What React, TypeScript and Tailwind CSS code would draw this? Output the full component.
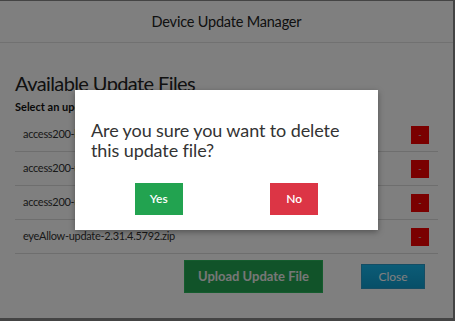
import { useState } from 'react'

const files = [
  'access200-bootloader-1.0.2.zip',
  'access200-update-2.31.4.5790.zip',
  'access200-update-2.31.4.5791.zip',
  'eyeAllow-update-2.31.4.5792.zip',
]

export default function App() {
  const [confirmOpen] = useState(true)

  return (
    <div
      className="relative h-[321px] w-[455px] overflow-hidden bg-white text-[#333] border-t border-r-2 border-b-[3px] border-[#444]"
      style={{ fontFamily: 'Lato, "Noto Sans", sans-serif' }}
    >
      {/* Header */}
      <div className="flex h-[42px] items-center justify-center border-b border-[#e2e2e2]">
        <h1 className="text-[14.5px] tracking-[-0.2px] text-[#222]">Device Update Manager</h1>
      </div>

      {/* Body */}
      <div className="px-[15px] pt-[27px]">
        <h2 className="text-[20px] leading-[26px] tracking-[-0.6px] text-[#222]">Available Update Files</h2>
        <p className="mt-[4px] text-[11px] font-bold leading-[14px] text-[#111]">Select an update file</p>

        <ul className="mt-[4px]">
          {files.map(f => (
            <li key={f} className="flex h-[34px] items-center justify-between border-b border-[#dcdcdc] pl-[8px] pr-[9px]">
              <span className="text-[11px] tracking-[-0.3px] text-[#333]">{f}</span>
              <button className="flex h-[18px] w-[18px] items-center justify-center bg-[#f40000] text-[9px] leading-none text-[#ccc]">
                -
              </button>
            </li>
          ))}
        </ul>

        <div className="mt-[6px] flex items-center justify-end gap-[38px] pr-[13px]">
          <button className="h-[33px] w-[139px] border border-[#2bb85c] bg-[#22a653] text-[13px] font-bold text-[#eee]">
            Upload Update File
          </button>
          <button className="h-[25px] w-[64px] border border-[#2a9ac8] bg-gradient-to-b from-[#18b8ee] to-[#0e9ed0] text-[12px] text-white">
            Close
          </button>
        </div>
      </div>

      {confirmOpen && (
        <>
          <div className="absolute inset-0 bg-black/50" />
          <div className="absolute left-[75px] top-[89px] w-[303px] bg-white px-[16px] pb-[15px] pt-[30px] shadow-[0_2px_6px_rgba(0,0,0,0.35)]">
            <p className="text-[18px] leading-[20px] tracking-[-0.1px] text-[#333]">
              Are you sure you want to delete this update file?
            </p>
            <div className="mt-[23px] grid grid-cols-2">
              <div className="flex justify-center">
                <button className="h-[32px] w-[48px] bg-[#22a350] text-[12px] font-semibold text-white">Yes</button>
              </div>
              <div className="flex justify-center">
                <button className="h-[32px] w-[48px] bg-[#dc3545] text-[12px] font-semibold text-white">No</button>
              </div>
            </div>
          </div>
        </>
      )}
    </div>
  )
}
